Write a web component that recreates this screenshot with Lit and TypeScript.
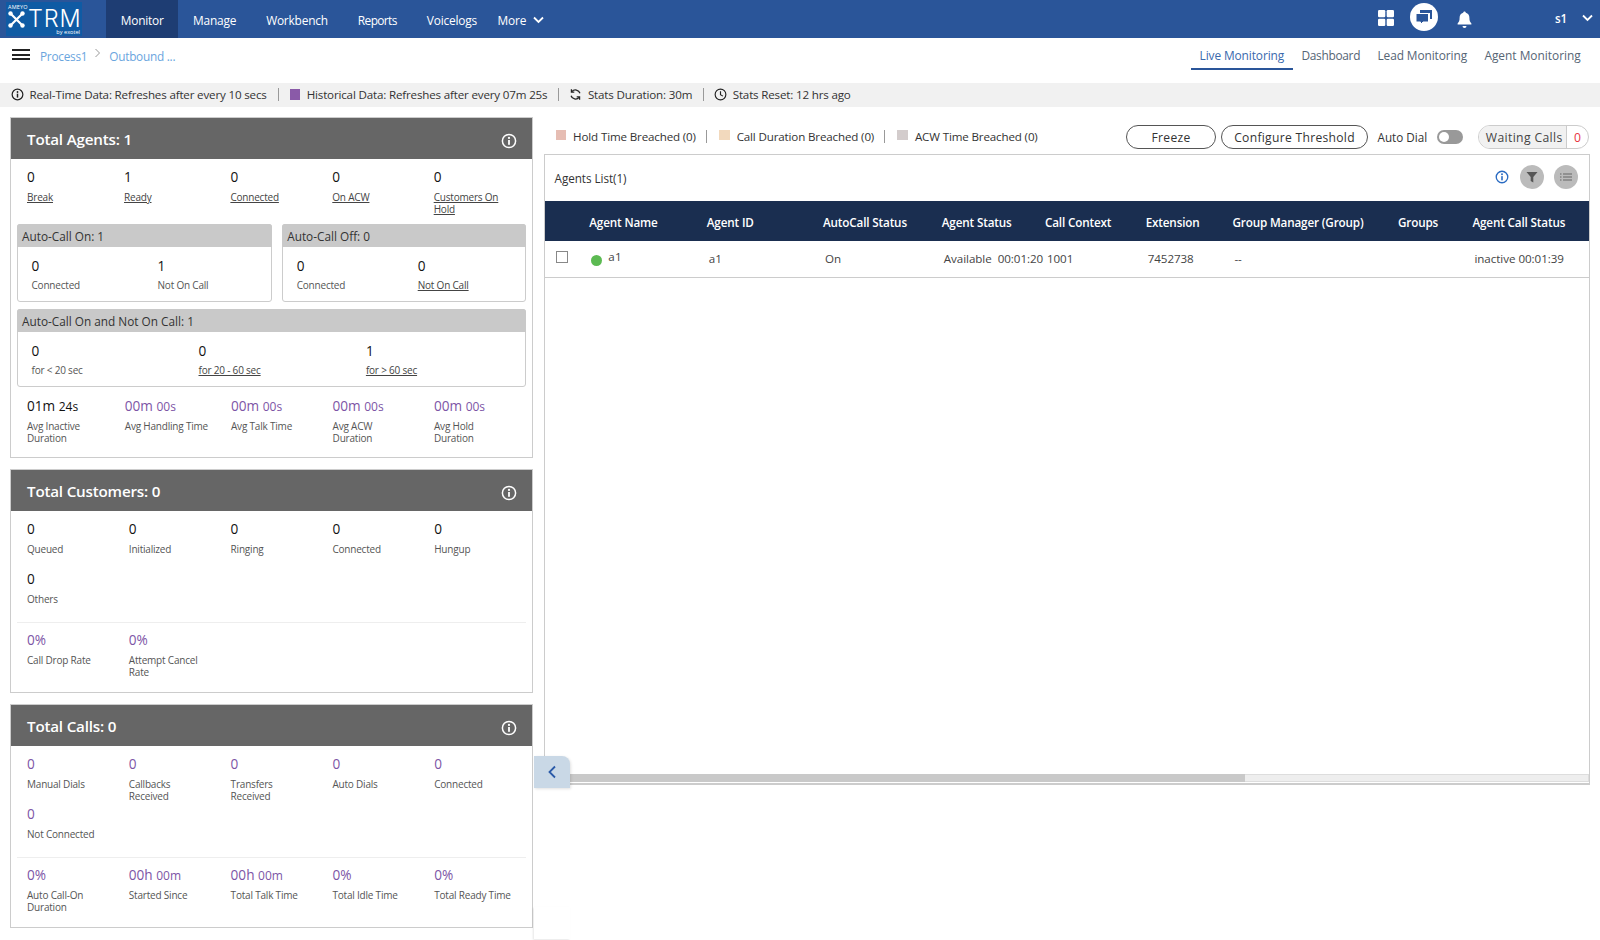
import { LitElement, html, css, svg } from "lit";
import { customElement } from "lit/decorators.js";

type Stat = { v: any; l: string; link?: boolean; purple?: boolean };

const infoIcon = (cls: string) => html`<svg class=${cls} viewBox="0 0 16 16"><circle cx="8" cy="8" r="6.6" fill="none" stroke="currentColor" stroke-width="1.5"/><rect x="7.1" y="7" width="1.8" height="4.8" fill="currentColor"/><circle cx="8" cy="4.9" r="1.1" fill="currentColor"/></svg>`;
const dur = (a: string, b: string) => html`${a} <small>${b}</small>`;

@customElement("app-root")
export class AppRoot extends LitElement {
  static styles = css`
    :host { display: block; position: relative; width: 1600px; height: 940px; overflow: hidden; background: #fff; font-family: "Open Sans", "Noto Sans", sans-serif; color: #333; }
    * { box-sizing: border-box; }
    .top { height: 38px; background: #2a5599; display: flex; align-items: stretch; color: #fff; font-size: 11.9px; letter-spacing: -.2px; padding-right: 7px; }
    .logo { width: 76px; height: 33.4px; margin: 2.3px 24px 0 6px; background: #0f5ba4; display: grid; grid-template-columns: 20px auto; grid-template-rows: 8px 18px 7px; padding-left: 2px; letter-spacing: 0; }
    .logo .am { grid-column: 1 / 3; font-size: 5.5px; line-height: 8px; padding-top: 1px; letter-spacing: .2px; }
    .logo svg { width: 17px; height: 17px; margin-top: 1px; }
    .logo .trm { font-family: "Inter", sans-serif; font-size: 23.5px; line-height: 18px; font-weight: 300; white-space: nowrap; letter-spacing: .8px; }
    .logo .by { grid-column: 1 / 3; text-align: right; font-size: 5.6px; line-height: 7px; padding: 1px 2px 0 0; }
    .menu { display: flex; align-items: center; height: 38px; padding: 2.5px 15px 0; white-space: nowrap; }
    .menu.active { background: #1e3d73; padding: 2.5px 14.7px 0; width: 72px; }
    .menu.rep { letter-spacing: -.6px; }
    .menu.more { padding-left: 5.6px; padding-right: 0; gap: 6.5px; }
    .menu.more svg { width: 11px; height: 8px; }
    .spacer { flex: 1; }
    .grid-ic { width: 16px; height: 16px; margin-top: 10px; margin-right: 16px; }
    .chat { width: 28px; height: 28px; border-radius: 50%; background: #fff; margin-top: 3px; margin-right: 19px; display: flex; align-items: center; justify-content: center; }
    .chat svg { width: 18px; height: 18px; }
    .bell { width: 15px; height: 17px; margin-top: 11px; margin-right: 83px; }
    .user { font-weight: 600; margin-top: 11px; width: 19px; line-height: 16px; font-size: 11.6px; letter-spacing: -.2px; }
    .user-ch { width: 11px; height: 8px; margin-left: 8px; margin-top: 14px; }

    .sub { height: 45px; display: flex; font-size: 11.8px; letter-spacing: -.25px; color: #6aa5de; }
    .burger { width: 18px; height: 11px; margin: 11px 10px 0 12px; border-top: 2px solid #222; border-bottom: 2px solid #222; }
    .burger i { display: block; height: 2px; background: #222; margin-top: 2.5px; }
    .crumb { margin-top: 9px; line-height: 18px; }
    .crumb-sep { width: 7px; height: 10px; margin: 10px 8px 0 7px; }
    .tabs { margin-left: auto; display: flex; padding-right: 10.5px; color: #566575; font-size: 11.9px; letter-spacing: -.1px; }
    .tab { height: 31.5px; padding: 8px 8.7px 0; line-height: 18px; white-space: nowrap; }
    .tab.on { color: #3a69ad; border-bottom: 2px solid #2a5599; }
    .tab.dash { letter-spacing: -.3px; }
    .tab.ag { letter-spacing: 0; }

    .bar { height: 24px; background: #f1f1f1; display: flex; align-items: center; font-size: 11.6px; letter-spacing: -.17px; color: #333; white-space: nowrap; padding: 0 0 1px 11px; }
    .bar .ic { width: 13px; height: 13px; margin-right: 5.5px; flex: none; color: #222; }
    .bar .sq { width: 10.5px; height: 10.5px; background: #8a5aa8; margin-right: 6.5px; }
    .bar .sep { width: 1px; height: 13px; background: #999; margin: 0 10.5px; }
    .bar .sep.first { margin: 0 11px; }

    .main { display: flex; }
    .left { width: 523px; margin-left: 10px; padding-top: 10px; display: flex; flex-direction: column; gap: 11px; flex: none; }
    .panel { border: 1px solid #ccc; background: #fff; }
    .p1 { height: 341px; } .p2 { height: 224px; } .p3 { height: 224px; }
    .phead { height: 41px; background: #666; color: #fff; display: flex; align-items: center; justify-content: space-between; padding: 1px 15px 0 16px; font-size: 15.2px; letter-spacing: -.2px; font-weight: 600; }
    .phead svg { width: 16px; height: 16px; margin-top: 3px; color: #fff; }
    .row { display: grid; padding-left: 16px; }
    .c-even { grid-template-columns: repeat(5, 101.8px); }
    .c-a { grid-template-columns: 97px 106.4px 101.9px 101.4px 100px; }
    .c-b { grid-template-columns: 97.8px 106.2px 101.6px 101.4px 100px; }
    .r1 { height: 65px; padding-top: 8px; }
    .stat { font-size: 10px; letter-spacing: -.2px; line-height: 12px; color: #555; }
    .row .stat { padding-right: 23px; }
    .c-b .stat { padding-right: 21px; }
    .stat .v { font-size: 13.6px; letter-spacing: 0; line-height: 20px; height: 20px; color: #111; margin-bottom: 4px; white-space: nowrap; }
    .stat .v small { font-size: 12px; }
    .bb .stat .v { margin-bottom: 2.5px; }
    .stat.p .v { color: #7d55a6; }
    .stat a { color: #444; text-decoration: underline; }
    .duo { display: flex; gap: 10.6px; margin: 0 6px; }
    .box { border: 1px solid #ccc; border-radius: 3px; height: 77.5px; width: 254.6px; }
    .box.b { width: 243.4px; }
    .box.w { display: block; width: auto; margin: 7.5px 6px 0; }
    .bh { height: 22.5px; background: #c9c9c9; font-size: 11.8px; line-height: 24.5px; padding-left: 5px; color: #333; white-space: nowrap; margin: -1px -1px 0; border-radius: 3px 3px 0 0; overflow: hidden; }
    .bb { display: grid; padding: 9.5px 0 0 13.5px; }
    .g-a { grid-template-columns: 126px 1fr; }
    .g-b { grid-template-columns: 121px 1fr; }
    .g-c { grid-template-columns: 167px 167.4px 1fr; }
    .avg { padding-top: 9.5px; }
    .cust { height: 49.5px; padding-top: 8px; }
    .cust.o2 { padding-top: 8.5px; height: 61.5px; }
    .cust.o3 { padding-top: 8.5px; height: 61px; }
    .divider { height: 1px; background: #eee; margin: 0 6px; }
    .rate { padding-top: 7px; }

    .right { flex: none; width: 1046.4px; margin-left: 10.6px; padding-top: 18px; }
    .legend { height: 24px; display: flex; align-items: center; font-size: 11.6px; letter-spacing: -.15px; color: #333; white-space: nowrap; margin-bottom: 5.4px; padding-left: 12px; }
    .legend .s { width: 10.5px; height: 10.5px; margin-right: 7px; margin-top: -4px; }
    .s1 { background: #e6bdb3; } .s2 { background: #f2d9bd; } .s3 { background: #d3cccc; }
    .legend .sep { width: 1px; height: 13px; background: #999; margin: -2px 12px 0 10.3px; }
    .legend .lt { margin-top: -2px; }
    .legend .end { margin-left: auto; display: flex; align-items: center; }
    .btn { height: 23.5px; border: 1px solid #555; border-radius: 12px; font-size: 12.1px; letter-spacing: .3px; display: flex; align-items: center; justify-content: center; color: #333; padding-top: 1px; }
    .b-f { width: 90px; margin-right: 5px; }
    .b-c { width: 147px; margin-right: 9.5px; }
    .ad { font-size: 11.7px; letter-spacing: 0; margin-right: 10px; }
    .sw { width: 25.6px; height: 14px; background: #999; border-radius: 7px; padding: 2px; margin-right: 15.5px; display: flex; }
    .sw i { width: 10px; height: 10px; border-radius: 50%; background: #fff; display: block; }
    .wc { width: 110.7px; height: 23.5px; border: 1px solid #ccc; border-radius: 12px; display: flex; font-size: 12.2px; letter-spacing: .35px; overflow: hidden; margin-right: 1px; }
    .wc span { flex: 1; background: #f1f1f1; border-right: 1px solid #ccc; display: flex; align-items: center; padding: 1px 0 0 6.5px; color: #444; white-space: nowrap; }
    .wc b { width: 20.5px; color: #e8343f; font-weight: 400; display: flex; align-items: center; justify-content: center; padding-top: 1px; }

    .card { height: 630.5px; border: 1px solid #ccc; border-bottom-width: 2px; display: flex; flex-direction: column; }
    .ct { height: 46px; display: flex; align-items: center; padding: 0 11px 0 10px; font-size: 11.7px; letter-spacing: -.05px; color: #333; }
    .ct .grow { flex: 1; }
    .ct .i { width: 14px; height: 14px; color: #2a6bc2; margin-right: 11px; margin-top: -3px; }
    .ct .c { width: 24px; height: 24px; border-radius: 50%; background: #bbb; display: flex; align-items: center; justify-content: center; margin-top: -3px; }
    .ct .c svg { width: 12px; height: 12px; }
    .ct .c.f { margin-right: 10px; }
    .tr { display: grid; grid-template-columns: 44.7px 117.5px 116.2px 118.8px 103.2px 100.7px 86.8px 165.5px 74.5px 1fr; white-space: nowrap; align-items: center; }
    .th { height: 40px; background: #1a2e50; color: #fff; font-size: 11.7px; letter-spacing: -.15px; font-weight: 600; padding-top: 1.5px; }
    .td { height: 36.5px; border-bottom: 1px solid #ccc; font-size: 11.6px; letter-spacing: -.05px; color: #444; padding-bottom: 2px; }
    .td > div { padding-left: 2px; }
    .td .cb { padding-left: 11.5px; }
    .cbx { width: 11.5px; height: 12px; border: 1px solid #888; margin-top: -2px; }
    .nm { display: flex; }
    .dot { width: 11px; height: 11px; border-radius: 50%; background: #5cba52; margin: 5px 6px 0 0; }
    .nm span { margin-top: -1px; letter-spacing: .2px; }
    .td .avail { word-spacing: 3px; }
    .fill { flex: 1; }
    .scroll { height: 8px; margin-bottom: 1px; background: #eee; border: 1px solid #ddd; }
    .thumb { height: 8px; width: 700px; background: #c9c9c9; margin: -1px; }
    .collapse { position: absolute; left: 534px; top: 756px; width: 36px; height: 32px; background: #c9d8e6; border-radius: 0 8px 0 0; box-shadow: 1px 1px 3px rgba(0,0,0,.12); display: flex; align-items: center; justify-content: center; }
    .collapse svg { width: 10px; height: 14px; margin-right: 1px; }
    .ghost { position: absolute; left: 534px; top: 907px; width: 36px; height: 32px; background: #fff; box-shadow: -1px 1px 2px rgba(0,0,0,.1); }
  `;

  private stats(items: Stat[], cls: string) {
    return html`<div class="row ${cls}">${items.map((s) => html`<div class="stat ${s.purple ? "p" : ""}"><div class="v">${s.v}</div>${s.link ? html`<a>${s.l}</a>` : s.l}</div>`)}</div>`;
  }

  render() {
    const chev = svg`<path d="M1 1.5 L5.5 6 L10 1.5" fill="none" stroke="#fff" stroke-width="1.8"/>`;
    return html`
      <div class="top">
        <div class="logo">
          <div class="am">AMEYO</div>
          <svg viewBox="0 0 17 17"><path d="M3 3 L14 14 M14 3 L3 14" stroke="#fff" stroke-width="2.2"/><circle cx="2.5" cy="2.5" r="2.2" fill="#fff"/><circle cx="14.5" cy="2.5" r="2.2" fill="#fff"/><circle cx="2.5" cy="14.5" r="2.2" fill="#fff"/><circle cx="14.5" cy="14.5" r="2.2" fill="#fff"/></svg>
          <div class="trm">TRM</div>
          <div class="by">by exotel</div>
        </div>
        <div class="menu active">Monitor</div>
        <div class="menu">Manage</div>
        <div class="menu">Workbench</div>
        <div class="menu rep">Reports</div>
        <div class="menu">Voicelogs</div>
        <div class="menu more">More <svg viewBox="0 0 11 8">${chev}</svg></div>
        <div class="spacer"></div>
        <svg class="grid-ic" viewBox="0 0 16 16" fill="#fff"><rect x="0" y="0" width="7.3" height="7.3" rx="1.2"/><rect x="8.7" y="0" width="7.3" height="7.3" rx="1.2"/><rect x="0" y="8.7" width="7.3" height="7.3" rx="1.2"/><rect x="8.7" y="8.7" width="7.3" height="7.3" rx="1.2"/></svg>
        <div class="chat"><svg viewBox="0 0 18 18"><path d="M5 2 H17 V11 H15 V5 H5 Z" fill="#2a5599"/><path d="M1 5.5 H13.5 V14 H8 L5.5 16.5 V14 H1 Z" fill="#2a5599" stroke="#fff" stroke-width="1"/></svg></div>
        <svg class="bell" viewBox="0 0 15 17" fill="#fff"><path d="M7.5 .5 c.8 0 1.3.6 1.3 1.3 c2.4.6 3.6 2.6 3.6 5 c0 3 .6 4.2 2 5.7 v1 H.6 v-1 c1.4-1.5 2-2.7 2-5.7 c0-2.4 1.2-4.4 3.6-5 C6.2 1.1 6.7 .5 7.5 .5z"/><path d="M5.5 15 h4 a2 2 0 0 1-4 0z"/></svg>
        <div class="user">s1</div>
        <svg class="user-ch" viewBox="0 0 11 8">${chev}</svg>
      </div>

      <div class="sub">
        <div class="burger"><i></i></div>
        <div class="crumb">Process1</div>
        <svg class="crumb-sep" viewBox="0 0 7 10"><path d="M1.5 1 L5.5 5 L1.5 9" fill="none" stroke="#999" stroke-width="1"/></svg>
        <div class="crumb">Outbound ...</div>
        <div class="tabs">
          <div class="tab on">Live Monitoring</div>
          <div class="tab dash">Dashboard</div>
          <div class="tab">Lead Monitoring</div>
          <div class="tab ag">Agent Monitoring</div>
        </div>
      </div>

      <div class="bar">
        ${infoIcon("ic")}<span>Real-Time Data: Refreshes after every 10 secs</span><i class="sep first"></i>
        <i class="sq"></i><span>Historical Data: Refreshes after every 07m 25s</span><i class="sep"></i>
        <svg class="ic" viewBox="0 0 16 16" fill="none" stroke="currentColor" stroke-width="1.6"><path d="M13.5 6.5 A5.8 5.8 0 0 0 3.5 4.5 M2.5 9.5 A5.8 5.8 0 0 0 12.5 11.5"/><path d="M3 1.5 V5 H6.5 M13 14.5 V11 H9.5"/></svg><span>Stats Duration: 30m</span><i class="sep"></i>
        <svg class="ic" viewBox="0 0 16 16" fill="none" stroke="currentColor" stroke-width="1.4"><circle cx="8" cy="8" r="6.6"/><path d="M8 4 V8.3 L11 10"/></svg><span>Stats Reset: 12 hrs ago</span>
      </div>

      <div class="main">
        <div class="left">
          <div class="panel p1">
            <div class="phead">Total Agents: 1 ${infoIcon("")}</div>
            <div class="r1">${this.stats([
              { v: "0", l: "Break", link: true }, { v: "1", l: "Ready", link: true }, { v: "0", l: "Connected", link: true },
              { v: "0", l: "On ACW", link: true }, { v: "0", l: "Customers On Hold", link: true },
            ], "c-a")}</div>
            <div class="duo">
              <div class="box"><div class="bh">Auto-Call On: 1</div><div class="bb g-a">
                <div class="stat"><div class="v">0</div>Connected</div>
                <div class="stat"><div class="v">1</div>Not On Call</div>
              </div></div>
              <div class="box b"><div class="bh">Auto-Call Off: 0</div><div class="bb g-b">
                <div class="stat"><div class="v">0</div>Connected</div>
                <div class="stat"><div class="v">0</div><a>Not On Call</a></div>
              </div></div>
            </div>
            <div class="box w"><div class="bh">Auto-Call On and Not On Call: 1</div><div class="bb g-c">
              <div class="stat"><div class="v">0</div>for &lt; 20 sec</div>
              <div class="stat"><div class="v">0</div><a>for 20 - 60 sec</a></div>
              <div class="stat"><div class="v">1</div><a>for &gt; 60 sec</a></div>
            </div></div>
            <div class="avg">${this.stats([
              { v: dur("01m", "24s"), l: "Avg Inactive Duration" },
              { v: dur("00m", "00s"), l: "Avg Handling Time", purple: true },
              { v: dur("00m", "00s"), l: "Avg Talk Time", purple: true },
              { v: dur("00m", "00s"), l: "Avg ACW Duration", purple: true },
              { v: dur("00m", "00s"), l: "Avg Hold Duration", purple: true },
            ], "c-b")}</div>
          </div>

          <div class="panel p2">
            <div class="phead">Total Customers: 0 ${infoIcon("")}</div>
            <div class="cust">${this.stats([
              { v: "0", l: "Queued" }, { v: "0", l: "Initialized" }, { v: "0", l: "Ringing" }, { v: "0", l: "Connected" }, { v: "0", l: "Hungup" },
            ], "c-even")}</div>
            <div class="cust o2">${this.stats([{ v: "0", l: "Others" }], "c-even")}</div>
            <div class="divider"></div>
            <div class="rate">${this.stats([
              { v: "0%", l: "Call Drop Rate", purple: true }, { v: "0%", l: "Attempt Cancel Rate", purple: true },
            ], "c-even")}</div>
          </div>

          <div class="panel p3">
            <div class="phead">Total Calls: 0 ${infoIcon("")}</div>
            <div class="cust">${this.stats([
              { v: "0", l: "Manual Dials", purple: true }, { v: "0", l: "Callbacks Received", purple: true }, { v: "0", l: "Transfers Received", purple: true },
              { v: "0", l: "Auto Dials", purple: true }, { v: "0", l: "Connected", purple: true },
            ], "c-even")}</div>
            <div class="cust o3">${this.stats([{ v: "0", l: "Not Connected", purple: true }], "c-even")}</div>
            <div class="divider"></div>
            <div class="rate">${this.stats([
              { v: "0%", l: "Auto Call-On Duration", purple: true }, { v: dur("00h", "00m"), l: "Started Since", purple: true },
              { v: dur("00h", "00m"), l: "Total Talk Time", purple: true }, { v: "0%", l: "Total Idle Time", purple: true }, { v: "0%", l: "Total Ready Time", purple: true },
            ], "c-even")}</div>
          </div>
        </div>

        <div class="right">
          <div class="legend">
            <i class="s s1"></i><span class="lt">Hold Time Breached (0)</span><i class="sep"></i>
            <i class="s s2"></i><span class="lt">Call Duration Breached (0)</span><i class="sep"></i>
            <i class="s s3"></i><span class="lt">ACW Time Breached (0)</span>
            <div class="end">
              <div class="btn b-f">Freeze</div>
              <div class="btn b-c">Configure Threshold</div>
              <div class="ad">Auto Dial</div>
              <div class="sw"><i></i></div>
              <div class="wc"><span>Waiting Calls</span><b>0</b></div>
            </div>
          </div>
          <div class="card">
            <div class="ct">
              <div class="grow">Agents List(1)</div>
              ${infoIcon("i")}
              <div class="c f"><svg viewBox="0 0 12 12"><path d="M.5 1 H11.5 L7.3 6 V11.5 L4.7 10 V6 Z" fill="#555"/></svg></div>
              <div class="c"><svg viewBox="0 0 12 12" stroke="#666" stroke-width="1.1"><path d="M3 3 H12 M3 6 H12 M3 9 H12 M0 3 H1.5 M0 6 H1.5 M0 9 H1.5"/></svg></div>
            </div>
            <div class="tr th">
              <div></div><div>Agent Name</div><div>Agent ID</div><div>AutoCall Status</div><div>Agent Status</div><div>Call Context</div><div>Extension</div><div>Group Manager (Group)</div><div>Groups</div><div>Agent Call Status</div>
            </div>
            <div class="tr td">
              <div class="cb"><div class="cbx"></div></div>
              <div class="nm"><i class="dot"></i><span>a1</span></div>
              <div>a1</div><div>On</div><div class="avail">Available 00:01:20</div><div>1001</div><div>7452738</div><div>--</div><div></div><div>inactive 00:01:39</div>
            </div>
            <div class="fill"></div>
            <div class="scroll"><div class="thumb"></div></div>
          </div>
        </div>
      </div>

      <div class="collapse"><svg viewBox="0 0 10 14"><path d="M8 1.5 L2.5 7 L8 12.5" fill="none" stroke="#2a5aa8" stroke-width="1.8"/></svg></div>
      <div class="ghost"></div>
    `;
  }
}
